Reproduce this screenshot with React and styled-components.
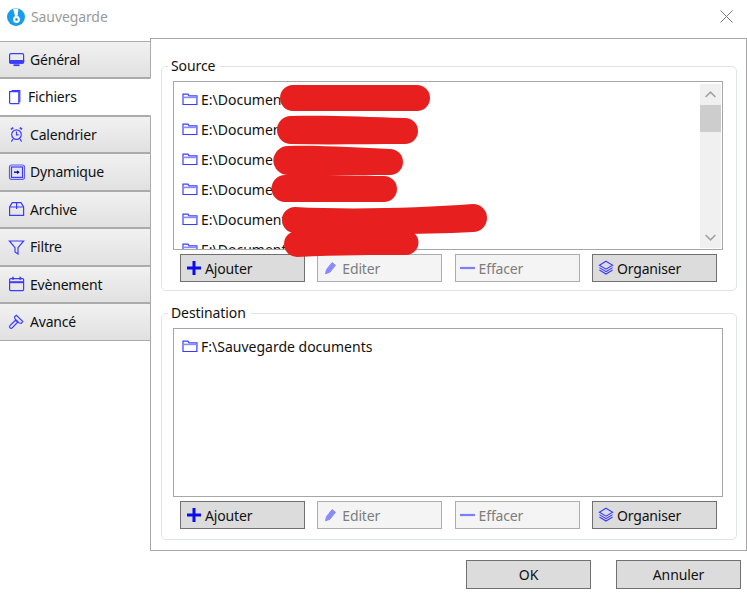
import React from "react";
import styled, { createGlobalStyle } from "styled-components";

const Global = createGlobalStyle`
  html, body { margin: 0; padding: 0; background: #fff; }
  * { box-sizing: border-box; }
`;

const Window = styled.div`
  position: relative;
  width: 747px;
  height: 597px;
  overflow: hidden;
  background: #fff;
  font-family: "Noto Sans", "Open Sans", sans-serif;
  font-size: 14px;
  color: #111;
  display: flex;
  flex-direction: column;
`;

const TitleBar = styled.div`
  height: 38px;
  flex: none;
  display: flex;
  align-items: center;
  padding: 0 14px 5px 7px;
  gap: 6px;
`;

const Title = styled.span`
  flex: 1;
  color: #9a9a9a;
  font-size: 14px;
  letter-spacing: -0.1px;
`;

const Body = styled.div`
  display: flex;
  height: 513px;
  flex: none;
`;

const Sidebar = styled.nav`
  width: 151px;
  flex: none;
  padding-top: 2.5px;
  display: flex;
  flex-direction: column;
  position: relative;
  z-index: 1;
`;

const Tab = styled.div`
  height: 37.5px;
  display: flex;
  align-items: center;
  gap: ${(p) => (p.$active ? "6px" : "5px")};
  padding-left: 8px;
  letter-spacing: -0.2px;
  border-top: 1px solid #ababab;
  border-bottom: 1px solid #ababab;
  border-right: 1px solid ${(p) => (p.$active ? "#fff" : "#ababab")};
  background: ${(p) =>
    p.$active ? "#fff" : "linear-gradient(#f1f1f1, #e1e1e1)"};
`;

const Panel = styled.main`
  flex: none;
  width: 597px;
  margin-left: -1px;
  border: 1px solid #a6a6a6;
  padding: 19px 9px 9px 10px;
  display: flex;
  flex-direction: column;
  gap: 14px;
`;

const Group = styled.fieldset`
  margin: 0;
  flex: none;
  height: ${(p) => p.$height}px;
  min-width: 0;
  border: 1px solid #dce4ec;
  border-radius: 5px;
  padding: 7px 13px 0 11px;
  display: flex;
  flex-direction: column;
`;

const Legend = styled.legend`
  padding: 0 5px 0 3px;
  margin-left: -5px;
  line-height: 16px;
  letter-spacing: -0.1px;
  font-size: 14px;
`;

const ListBox = styled.div`
  height: 169px;
  flex: none;
  border: 1px solid #a6a6a6;
  display: flex;
  overflow: hidden;
`;

const Rows = styled.div`
  flex: 1;
  padding: 2px 0 0 8px;
  display: flex;
  flex-direction: column;
  overflow: hidden;
`;

const Row = styled.div`
  height: 30px;
  flex: none;
  display: flex;
  align-items: center;
  gap: 3px;
  white-space: nowrap;
`;

const Scrollbar = styled.div`
  width: 21px;
  flex: none;
  background: #f0f0f0;
  display: flex;
  flex-direction: column;
  margin: 2px 1px 1px 0;
`;

const Arrow = styled.div`
  height: 21px;
  flex: none;
  display: flex;
  align-items: center;
  justify-content: center;
`;

const Thumb = styled.div`
  height: 27px;
  flex: none;
  background: #cdcdcd;
`;

const Track = styled.div`
  flex: 1;
`;

const Toolbar = styled.div`
  display: flex;
  gap: 12.3px;
  padding: 4px 0 0 7px;
`;

const ToolButton = styled.div`
  width: 125px;
  flex: none;
  height: 28px;
  display: flex;
  align-items: center;
  gap: 3px;
  padding-left: ${(p) => (p.$narrow ? "4px" : "5px")};
  letter-spacing: -0.15px;
  border: 1px solid ${(p) => (p.$disabled ? "#adadad" : "#707070")};
  background: ${(p) => (p.$disabled ? "#f4f4f4" : "#dcdcdc")};
  color: ${(p) => (p.$disabled ? "#7d7d7d" : "#111")};
`;

const Footer = styled.footer`
  display: flex;
  justify-content: flex-end;
  gap: 25px;
  padding: 9px 6px 0 0;
`;

const DialogButton = styled.div`
  width: 125px;
  height: 29px;
  display: flex;
  align-items: center;
  justify-content: center;
  border: 1px solid #707070;
  background: #dcdcdc;
  letter-spacing: -0.1px;
`;

const Redactions = styled.svg`
  position: absolute;
  left: 0;
  top: 0;
  pointer-events: none;
  z-index: 2;
`;

const Icon = ({ children, size = 16, w, h, color = "#3c3cff", sw = 1.2 }) => (
  <svg
    width={w || size}
    height={h || size}
    viewBox={`0 0 ${w || size} ${h || size}`}
    fill="none"
    stroke={color}
    strokeWidth={sw}
    style={{ flex: "none" }}
  >
    {children}
  </svg>
);

const Logo = () => (
  <svg width="18" height="18" viewBox="0 0 18 18" style={{ flex: "none" }}>
    <circle cx="9" cy="9" r="9" fill="#1a9cec" />
    <circle cx="9.5" cy="11.5" r="2.6" fill="#9fd6f6" stroke="#fff" strokeWidth="1.6" />
    <circle cx="9.5" cy="11.5" r="0.9" fill="#1a7cc0" />
    <path d="M6 0.6h5.5L10.5 8H8z" fill="#fff" />
  </svg>
);

const Close = () => (
  <svg width="13" height="13" viewBox="0 0 13 13" fill="none" stroke="#7a7a7a" strokeWidth="1">
    <path d="M.5 .5l12 12M12.5 .5l-12 12" />
  </svg>
);

const FolderIcon = () => (
  <Icon w={16} h={14}>
    <path d="M1 12.5V2.2h5l1 1.6h7.9v8.7z" />
    <path d="M1 5.4h14.9" strokeWidth="1.6" stroke="#8a8aff" />
  </Icon>
);

const tabIcons = {
  general: (
    <Icon w={17} h={16}>
      <rect x="1.6" y="2.6" width="14" height="9.6" rx="1.4" />
      <path d="M1.6 9.5h14v1.6a1 1 0 0 1-1 1h-12a1 1 0 0 1-1-1z" fill="#3c3cff" />
      <path d="M5.5 14.2h6" strokeWidth="1.8" />
    </Icon>
  ),
  files: (
    <Icon w={14} h={16}>
      <path d="M3.6 1.6h8.2v11.6" />
      <path d="M1.6 2.6h8.6a.6.6 0 0 1 .6.6v11.4H2.6a1 1 0 0 1-1-1z" />
    </Icon>
  ),
  calendar: (
    <Icon w={17} h={17}>
      <circle cx="8.5" cy="8.6" r="4.8" />
      <path d="M8.5 5.6v3.2h2.2M5 13l-1.6 2.6M12 13l1.6 2.6" />
      <path d="M3 3.4l2.2-1.8M14 3.4l-2.2-1.8" strokeWidth="1.8" />
    </Icon>
  ),
  dynamic: (
    <Icon w={17} h={16}>
      <rect x="1.5" y="1" width="15" height="14.4" rx="2" stroke="#5a5aff" />
      <rect x="3.5" y="3" width="11" height="10.4" fill="#e4e4ff" stroke="#3c3cff" />
      <path d="M6 8.2h5" stroke="#111180" strokeWidth="1.4" />
      <path d="M9 6.2l2.6 2-2.6 2z" fill="#111180" stroke="none" />
    </Icon>
  ),
  archive: (
    <Icon w={17} h={16}>
      <path d="M1.6 6v8.4h14V6L13 1.6H4.2z" />
      <path d="M1.6 6h14M8.6 1.6v6.4" />
    </Icon>
  ),
  filter: (
    <Icon w={17} h={16}>
      <path d="M1.4 2h14.2l-5.6 6.6v6.4l-3-2V8.6z" />
    </Icon>
  ),
  event: (
    <Icon w={17} h={16}>
      <rect x="1.6" y="2.6" width="14" height="12" rx="1" />
      <path d="M1.6 6.2h14" strokeWidth="2" />
      <path d="M5 .8v3M12.2 .8v3" strokeWidth="1.6" />
    </Icon>
  ),
  advanced: (
    <Icon w={17} h={16}>
      <path d="M2 11.6l5.6-5.4 2 2-5.4 5.6a1.3 1.3 0 0 1-2.2-2.2z" />
      <path d="M6.6 2.8l1.8-1.4 6.4 6.2-1.6 1.8-2-.4-4.2-4z" />
    </Icon>
  ),
};

const PlusIcon = () => (
  <Icon w={16} h={16} color="#0b0bf0" sw={3}>
    <path d="M8 1v14M1 8h14" />
  </Icon>
);

const PencilIcon = () => (
  <Icon w={16} h={16} color="#8a8aff" sw={1}>
    <path d="M2.5 13.8l1-4.2 5.6-7 3.4 2.6-5.6 7z" fill="#8a8aff" />
    <path d="M10.2 1.6l3.2 2.6" stroke="#fff" strokeWidth=".6" />
  </Icon>
);

const MinusIcon = () => (
  <Icon w={16} h={16} color="#7d7dff" sw={2.2}>
    <path d="M0 8h15" />
  </Icon>
);

const LayersIcon = () => (
  <Icon w={16} h={16} color="#3c3cff" sw={1.1}>
    <path d="M8 1.2l6.6 4-6.6 4-6.6-4z" />
    <path d="M1.4 7.6l6.6 4 6.6-4M1.4 10l6.6 4 6.6-4" />
  </Icon>
);

const Chevron = ({ up }) => (
  <svg width="11" height="7" viewBox="0 0 11 7" fill="none" stroke="#a0a0a0" strokeWidth="1.5">
    <path d={up ? "M.6 6l4.9-4.9L10.4 6" : "M.6 1l4.9 4.9L10.4 1"} />
  </svg>
);

const tabs = [
  ["general", "Général"],
  ["files", "Fichiers"],
  ["calendar", "Calendrier"],
  ["dynamic", "Dynamique"],
  ["archive", "Archive"],
  ["filter", "Filtre"],
  ["event", "Evènement"],
  ["advanced", "Avancé"],
];

const Actions = () => (
  <Toolbar>
    <ToolButton>
      <PlusIcon />
      Ajouter
    </ToolButton>
    <ToolButton $disabled>
      <PencilIcon />
      Editer
    </ToolButton>
    <ToolButton $disabled $narrow>
      <MinusIcon />
      Effacer
    </ToolButton>
    <ToolButton>
      <LayersIcon />
      Organiser
    </ToolButton>
  </Toolbar>
);

const sources = ["E:\\Documents", "E:\\Documents", "E:\\Documents", "E:\\Documents", "E:\\Documents", "E:\\Documents"];

const blobs = [
  "M293 85H417a13 13 0 0 1 0 26H293a13 13 0 0 1 0-26z",
  "M291 116C330 115 365 117 405 118a13 13 0 0 1 0 26C365 144 330 145 291 144a14 14 0 0 1 0-28z",
  "M288 146C320 145 360 148 390 149a13 13 0 0 1 0 26C360 175 320 176 288 175a14.5 14.5 0 0 1 0-29z",
  "M285 175C320 174 355 176 384 176a13 13 0 0 1 0 26H285a13.5 13.5 0 0 1 0-27z",
  "M295 207C350 210 420 208 473 204a14 14 0 0 1 0 28C420 235 350 234 295 233a13 13 0 0 1 0-26z",
  "M297 231C340 231 375 230 406 230a12.5 12.5 0 0 1 0 25C375 255 340 255 297 257a13 13 0 0 1 0-26z",
];

export default function App() {
  return (
    <>
      <Global />
      <Window>
        <TitleBar>
          <Logo />
          <Title>Sauvegarde</Title>
          <Close />
        </TitleBar>
        <Body>
          <Sidebar>
            {tabs.map(([key, label]) => (
              <Tab key={key} $active={key === "files"}>
                {tabIcons[key]}
                {label}
              </Tab>
            ))}
          </Sidebar>
          <Panel>
            <Group $height={233}>
              <Legend>Source</Legend>
              <ListBox>
                <Rows>
                  {sources.map((s, i) => (
                    <Row key={i}>
                      <FolderIcon />
                      {s}
                    </Row>
                  ))}
                </Rows>
                <Scrollbar>
                  <Arrow>
                    <Chevron up />
                  </Arrow>
                  <Thumb />
                  <Track />
                  <Arrow>
                    <Chevron />
                  </Arrow>
                </Scrollbar>
              </ListBox>
              <Actions />
            </Group>
            <Group $height={235}>
              <Legend>Destination</Legend>
              <ListBox>
                <Rows>
                  <Row>
                    <FolderIcon />
                    F:\Sauvegarde documents
                  </Row>
                </Rows>
              </ListBox>
              <Actions />
            </Group>
          </Panel>
        </Body>
        <Footer>
          <DialogButton>OK</DialogButton>
          <DialogButton>Annuler</DialogButton>
        </Footer>
        <Redactions width="747" height="597" viewBox="0 0 747 597">
          {blobs.map((d, i) => (
            <path key={i} d={d} fill="#e71f1f" />
          ))}
        </Redactions>
      </Window>
    </>
  );
}
